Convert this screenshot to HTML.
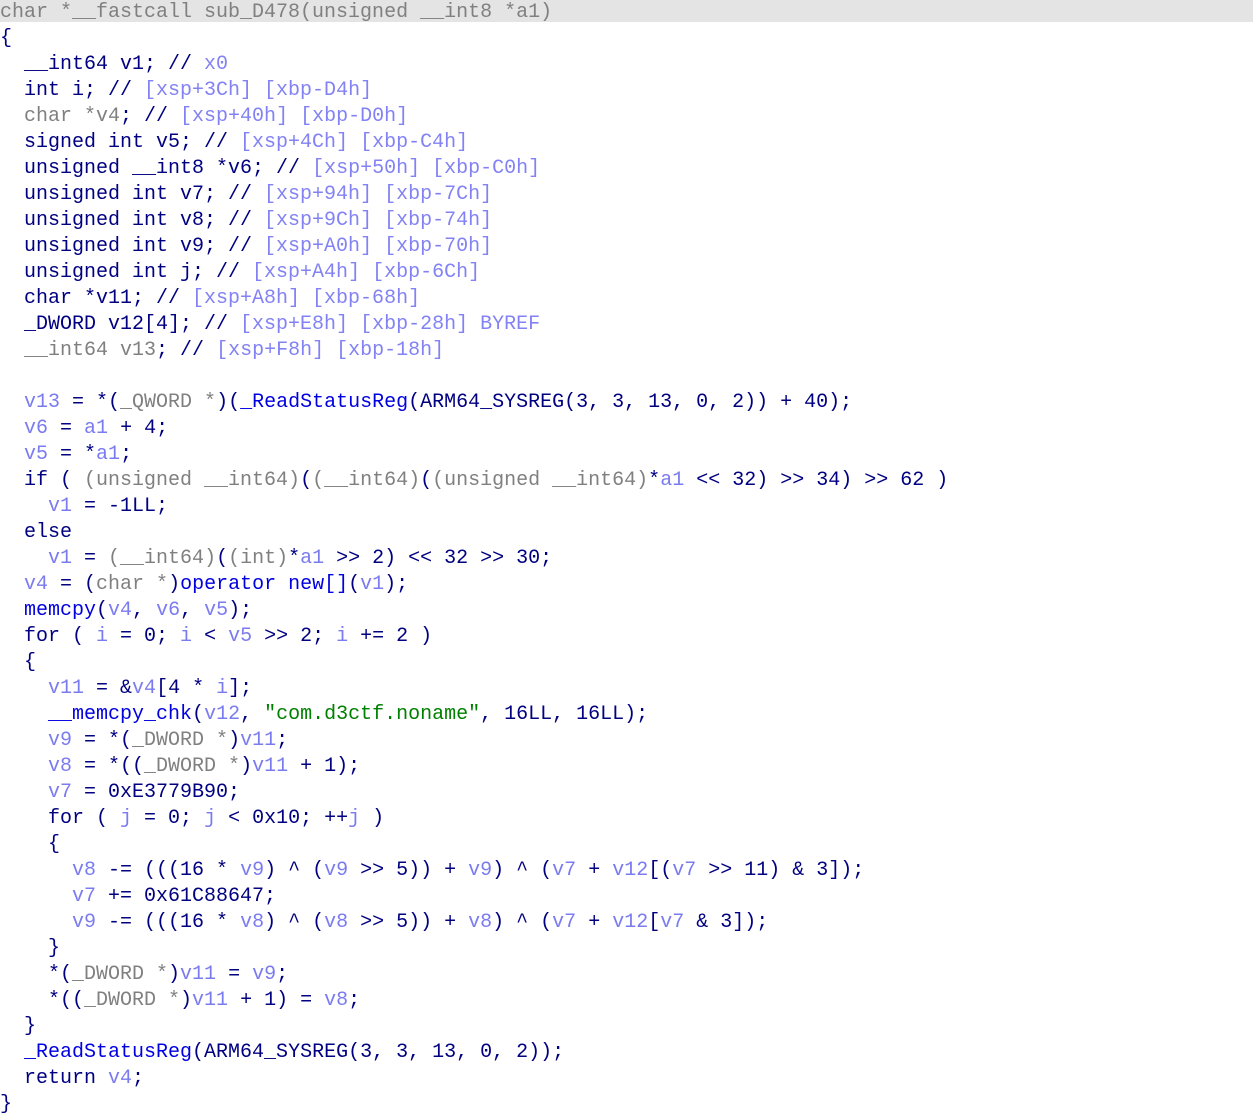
<!DOCTYPE html>
<html><head><meta charset="utf-8"><style>
html,body{margin:0;padding:0;background:#fff;width:1253px;height:1120px;overflow:hidden}
.hdr{position:absolute;left:0;top:0;width:1253px;height:22px;background:#e4e4e4}
pre{position:absolute;left:0;top:0px;margin:0;font-family:"Liberation Mono",monospace;font-size:20px;line-height:26px;color:#000080;white-space:pre}
.g{color:#808080}.v{color:#7b7bf0}.c{color:#8282f4}.f{color:#0000e0}.s{color:#008000}
</style></head><body><div class="hdr"></div><pre><span class="g">char *__fastcall sub_D478(unsigned __int8 *a1)</span>
{
  __int64 v1; // <span class="c">x0</span>
  int i; // <span class="c">[xsp+3Ch] [xbp-D4h]</span>
  <span class="g">char *v4</span>; // <span class="c">[xsp+40h] [xbp-D0h]</span>
  signed int v5; // <span class="c">[xsp+4Ch] [xbp-C4h]</span>
  unsigned __int8 *v6; // <span class="c">[xsp+50h] [xbp-C0h]</span>
  unsigned int v7; // <span class="c">[xsp+94h] [xbp-7Ch]</span>
  unsigned int v8; // <span class="c">[xsp+9Ch] [xbp-74h]</span>
  unsigned int v9; // <span class="c">[xsp+A0h] [xbp-70h]</span>
  unsigned int j; // <span class="c">[xsp+A4h] [xbp-6Ch]</span>
  char *v11; // <span class="c">[xsp+A8h] [xbp-68h]</span>
  _DWORD v12[4]; // <span class="c">[xsp+E8h] [xbp-28h] BYREF</span>
  <span class="g">__int64 v13</span>; // <span class="c">[xsp+F8h] [xbp-18h]</span>

  <span class="v">v13</span> = *(<span class="g">_QWORD *</span>)(<span class="f">_ReadStatusReg</span>(ARM64_SYSREG(3, 3, 13, 0, 2)) + 40);
  <span class="v">v6</span> = <span class="v">a1</span> + 4;
  <span class="v">v5</span> = *<span class="v">a1</span>;
  if ( <span class="g">(unsigned __int64)</span>(<span class="g">(__int64)</span>(<span class="g">(unsigned __int64)</span>*<span class="v">a1</span> &lt;&lt; 32) &gt;&gt; 34) &gt;&gt; 62 )
    <span class="v">v1</span> = -1LL;
  else
    <span class="v">v1</span> = <span class="g">(__int64)</span>(<span class="g">(int)</span>*<span class="v">a1</span> &gt;&gt; 2) &lt;&lt; 32 &gt;&gt; 30;
  <span class="v">v4</span> = (<span class="g">char *</span>)<span class="f">operator new[]</span>(<span class="v">v1</span>);
  <span class="f">memcpy</span>(<span class="v">v4</span>, <span class="v">v6</span>, <span class="v">v5</span>);
  for ( <span class="v">i</span> = 0; <span class="v">i</span> &lt; <span class="v">v5</span> &gt;&gt; 2; <span class="v">i</span> += 2 )
  {
    <span class="v">v11</span> = &amp;<span class="v">v4</span>[4 * <span class="v">i</span>];
    <span class="f">__memcpy_chk</span>(<span class="v">v12</span>, <span class="s">"com.d3ctf.noname"</span>, 16LL, 16LL);
    <span class="v">v9</span> = *(<span class="g">_DWORD *</span>)<span class="v">v11</span>;
    <span class="v">v8</span> = *((<span class="g">_DWORD *</span>)<span class="v">v11</span> + 1);
    <span class="v">v7</span> = 0xE3779B90;
    for ( <span class="v">j</span> = 0; <span class="v">j</span> &lt; 0x10; ++<span class="v">j</span> )
    {
      <span class="v">v8</span> -= (((16 * <span class="v">v9</span>) ^ (<span class="v">v9</span> &gt;&gt; 5)) + <span class="v">v9</span>) ^ (<span class="v">v7</span> + <span class="v">v12</span>[(<span class="v">v7</span> &gt;&gt; 11) &amp; 3]);
      <span class="v">v7</span> += 0x61C88647;
      <span class="v">v9</span> -= (((16 * <span class="v">v8</span>) ^ (<span class="v">v8</span> &gt;&gt; 5)) + <span class="v">v8</span>) ^ (<span class="v">v7</span> + <span class="v">v12</span>[<span class="v">v7</span> &amp; 3]);
    }
    *(<span class="g">_DWORD *</span>)<span class="v">v11</span> = <span class="v">v9</span>;
    *((<span class="g">_DWORD *</span>)<span class="v">v11</span> + 1) = <span class="v">v8</span>;
  }
  <span class="f">_ReadStatusReg</span>(ARM64_SYSREG(3, 3, 13, 0, 2));
  return <span class="v">v4</span>;
}</pre></body></html>
